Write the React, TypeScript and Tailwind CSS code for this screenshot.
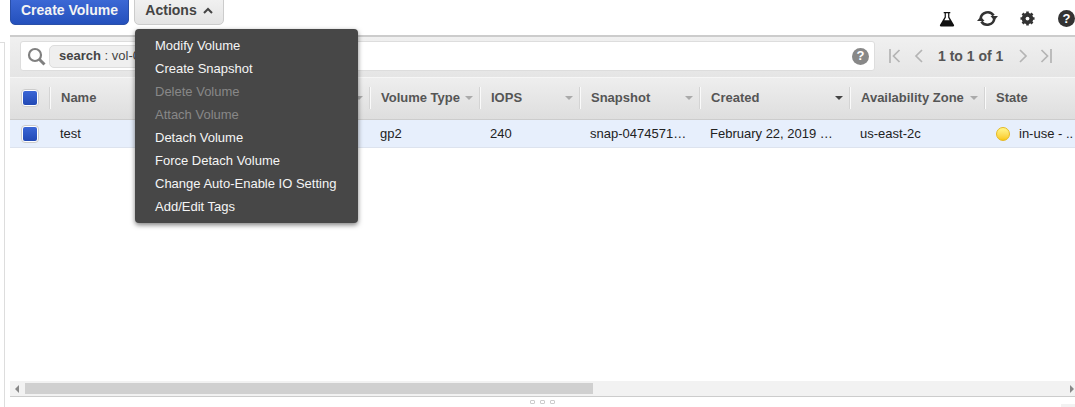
import React from 'react';

const font = { fontFamily: '"Liberation Sans", Arial, sans-serif' };

const columns = [
  { label: 'Volume Type', width: 'w-[109px]', arrow: 'border-t-[#aaa]' },
  { label: 'IOPS', width: 'w-[99px]', arrow: 'border-t-[#aaa]' },
  { label: 'Snapshot', width: 'w-[119px]', arrow: 'border-t-[#aaa]' },
  { label: 'Created', width: 'w-[149px]', arrow: 'border-t-[#444]' },
  { label: 'Availability Zone', width: 'w-[134px]', arrow: 'border-t-[#aaa]' },
];

const menu = [
  { label: 'Modify Volume' },
  { label: 'Create Snapshot' },
  { label: 'Delete Volume', disabled: true },
  { label: 'Attach Volume', disabled: true },
  { label: 'Detach Volume' },
  { label: 'Force Detach Volume' },
  { label: 'Change Auto-Enable IO Setting' },
  { label: 'Add/Edit Tags' },
];

function Check() {
  return (
    <span className="flex h-[18px] w-[18px] items-center justify-center rounded-[4px] border border-[#ccc] bg-white">
      <span className="h-[14px] w-[14px] rounded-[2px] bg-gradient-to-b from-[#3b66d6] to-[#2249b5]" />
    </span>
  );
}

function Arrow({ color }: { color: string }) {
  return <span className={`h-0 w-0 border-x-[4px] border-t-[4px] border-x-transparent ${color}`} />;
}

function Sep() {
  return <span className="h-[22px] w-px bg-[#fafafa] shadow-[-1px_0_0_#d4d4d4]" />;
}

export default function App() {
  return (
    <div className="relative flex h-[407px] w-[1075px] overflow-hidden bg-white text-[13px] text-[#222]" style={font}>
      <div className="mt-[42px] h-full w-[5px] shrink-0 border-t border-r border-[#ddd]" />
      <div className="ml-[5px] flex min-w-0 flex-1 flex-col">
        {/* top bar */}
        <div className="flex h-[35px] shrink-0 items-start">
          <button className="-mt-[4px] h-[29px] w-[119px] rounded-b-[5px] border border-[#2a4fa8] bg-gradient-to-b from-[#3f6bd8] to-[#2450bc] text-[14px] font-bold text-[#f4f4f4]">
            Create Volume
          </button>
          <button className="-mt-[4px] ml-[5px] flex h-[29px] w-[90px] items-center justify-center gap-[6px] rounded-b-[5px] border border-[#ccc] bg-gradient-to-b from-[#f2f2f2] to-[#e4e4e4] text-[14px] font-bold text-[#444]">
            Actions
            <svg width="10" height="7" viewBox="0 0 10 7" fill="none" stroke="#444" strokeWidth="2"><path d="M1 6l4-4 4 4" /></svg>
          </button>
          <div className="ml-auto mt-[10px] flex items-center gap-[22px]">
            <svg width="16" height="16" viewBox="0 0 16 17">
              <path d="M4.500 1h7v1.300h-1v4.200l5 8.500q.5 1.500-1 1.500H1.500q-1.500 0-1-1.500l5-8.500V2.300h-1z" fill="#111" />
              <path d="M6.800 2.300h2.400v4.700l1.600 2.800H5.200L6.800 7z" fill="#fff" />
            </svg>
            <svg width="21" height="17" viewBox="0 0 21 17" fill="none" stroke="#333" strokeWidth="2.600">
              <path d="M3.700 8.500a7 6.800 0 0 1 12.900-3" />
              <path d="M17.300 8.500a7 6.800 0 0 1-12.900 3" />
              <path d="M13.500 6H21l-3.800 4.500z" fill="#333" stroke="none" />
              <path d="M0 11h7.500L3.800 6.500z" fill="#333" stroke="none" />
            </svg>
            <svg width="15" height="15" viewBox="0 0 16 16">
              <circle cx="8" cy="8" r="4.300" fill="none" stroke="#333" strokeWidth="3.800" />
              <path d="M8 .5v15M.5 8h15M2.700 2.700l10.600 10.600M13.300 2.700L2.700 13.300" stroke="#333" strokeWidth="2.800" />
              <circle cx="8" cy="8" r="2" fill="#fff" />
            </svg>
            <span className="ml-[1px] flex h-[17px] w-[17px] items-center justify-center rounded-full bg-[#333] text-[13px] font-bold text-white">?</span>
          </div>
        </div>

        {/* search band */}
        <div className="flex h-[42px] shrink-0 items-center gap-[13px] border-t-2 border-[#ccc] bg-gradient-to-b from-[#f0f0f0] to-[#e5e5e5] pb-[2px] pl-[10px]">
          <div className="flex h-[30px] w-[855px] items-center rounded-[3px] border border-[#ddd] bg-white pl-[6px] pr-[5px]">
            <svg width="19" height="19" viewBox="0 0 19 19" fill="none" stroke="#808080">
              <circle cx="8" cy="8" r="6" strokeWidth="2.200" />
              <path d="M12.500 12.500l5 5" strokeWidth="3" />
            </svg>
            <span className="ml-[3px] flex h-[23px] w-[140px] items-center rounded-[5px] border border-[#ddd] bg-[#efefef] pl-[9px] text-[#444]">
              <b>search</b>&nbsp;: vol-0
            </span>
            <span className="ml-auto flex h-[17px] w-[17px] items-center justify-center rounded-full bg-[#888] text-[13px] font-bold text-white">?</span>
          </div>
          <div className="flex items-center">
            <svg className="ml-[1px]" width="12" height="14" viewBox="0 0 12 14" fill="none" stroke="#b4b4b4" strokeWidth="1.700"><path d="M1 0v14M10.500 1L4.500 7l6 6" /></svg>
            <svg className="ml-[13px]" width="10" height="14" viewBox="0 0 10 14" fill="none" stroke="#b4b4b4" strokeWidth="1.700"><path d="M8 1L2 7l6 6" /></svg>
            <span className="ml-[14px] text-[14px] font-bold text-[#555]">1 to 1 of 1</span>
            <svg className="ml-[15px]" width="10" height="14" viewBox="0 0 10 14" fill="none" stroke="#b4b4b4" strokeWidth="1.700"><path d="M2 1l6 6-6 6" /></svg>
            <svg className="ml-[12px]" width="12" height="14" viewBox="0 0 12 14" fill="none" stroke="#b4b4b4" strokeWidth="1.700"><path d="M1.500 1l6 6-6 6M11 0v14" /></svg>
          </div>
        </div>

        {/* table header */}
        <div className="flex h-[43px] shrink-0 items-center border-y border-t-[#f6f6f6] border-b-[#ccc] bg-gradient-to-b from-[#eeeeee] to-[#dedede] pb-[1px] text-[13px] font-bold text-[#555]">
          <div className="flex w-[40px] justify-center"><Check /></div>
          <Sep />
          <div className="flex w-[319px] items-center justify-between pl-[10px] pr-[7px]">
            <span>Name</span>
            <Arrow color="border-t-[#aaa]" />
          </div>
          {columns.map((c) => (
            <React.Fragment key={c.label}>
              <Sep />
              <div className={`flex items-center justify-between pl-[10px] pr-[7px] ${c.width}`}>
                <span>{c.label}</span>
                <Arrow color={c.arrow} />
              </div>
            </React.Fragment>
          ))}
          <Sep />
          <div className="pl-[10px]">State</div>
        </div>

        {/* table row */}
        <div className="flex h-[28px] shrink-0 items-center border-b border-[#dde3ee] bg-[#e7effc] text-[13px] text-[#222]">
          <div className="flex w-[40px] justify-center"><Check /></div>
          <div className="w-[320px] pl-[10px]">test</div>
          <div className="w-[110px] pl-[10px]">gp2</div>
          <div className="w-[100px] pl-[10px]">240</div>
          <div className="w-[120px] pl-[10px]">snap-0474571…</div>
          <div className="w-[150px] pl-[10px]">February 22, 2019 …</div>
          <div className="w-[135px] pl-[10px]">us-east-2c</div>
          <div className="flex items-center pl-[11px]">
            <span className="h-[14px] w-[14px] rounded-full border border-[#e6b820] bg-gradient-to-b from-[#fff78a] to-[#fac800]" />
            <span className="ml-[9px]">in-use - ..</span>
          </div>
        </div>

        <div className="flex-1" />

        {/* horizontal scrollbar */}
        <div className="flex h-[15px] shrink-0 items-center bg-[#f2f2f2]">
          <span className="ml-[5px] h-0 w-0 border-y-[4px] border-r-[4px] border-y-transparent border-r-[#888]" />
          <div className="ml-[6px] h-[11px] w-[568px] bg-[#d0d0d0]" />
          <span className="ml-auto mr-[1px] h-0 w-0 border-y-[4px] border-l-[4px] border-y-transparent border-l-[#888]" />
        </div>
        <div className="flex h-[11px] shrink-0 justify-center gap-[5px] border-t border-[#ccc] pt-[3px]">
          <span className="h-[4px] w-[5px] rounded-[1px] border border-[#ccc]" />
          <span className="h-[4px] w-[5px] rounded-[1px] border border-[#ccc]" />
          <span className="h-[4px] w-[5px] rounded-[1px] border border-[#ccc]" />
        </div>
      </div>

      {/* actions dropdown */}
      <div className="absolute left-[135px] top-[29px] flex h-[194px] w-[223px] flex-col rounded-[4px] bg-[#474747] pl-[20px] pt-[5px] shadow-[0_2px_5px_rgba(0,0,0,0.5)]">
        {menu.map((m) => (
          <div key={m.label} className={`flex h-[23px] shrink-0 items-center text-[13px] ${m.disabled ? 'text-[#888]' : 'text-[#f5f5f5]'}`}>
            {m.label}
          </div>
        ))}
      </div>
      <span className="absolute bottom-0 right-0 h-[3px] w-[14px] bg-[#f2f2f2]" />
    </div>
  );
}
